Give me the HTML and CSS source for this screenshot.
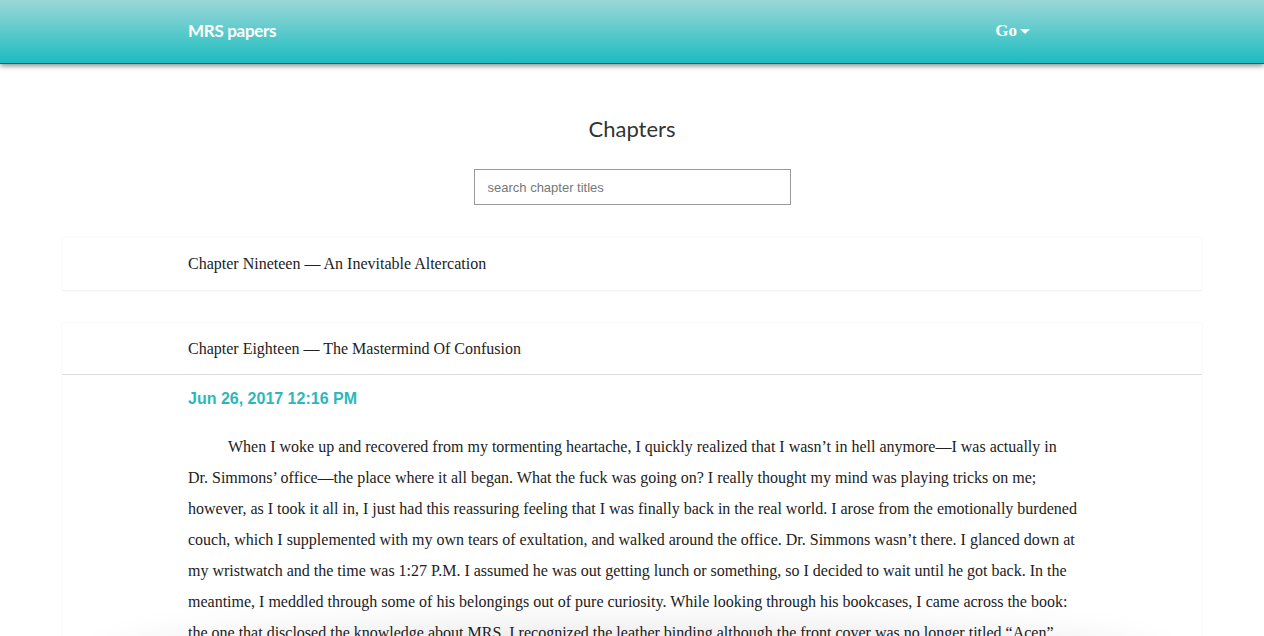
FILE: index.html
```html
<!DOCTYPE html>
<html lang="en">
<head>
<meta charset="utf-8">
<title>MRS papers</title>
<link rel="stylesheet" href="styles.css">
</head>
<body>
<header class="navbar">
  <a class="brand" href="#">MRS papers</a>
  <a class="go" href="#">Go <span class="caret"></span></a>
</header>
<main class="page">
  <h1 class="title">Chapters</h1>
  <div class="search-wrap">
    <input class="search" type="text" placeholder="search chapter titles">
  </div>
  <section class="panel">
    <div class="panel-head">Chapter Nineteen — An Inevitable Altercation</div>
  </section>
  <section class="panel">
    <div class="panel-head bordered">Chapter Eighteen — The Mastermind Of Confusion</div>
    <div class="panel-body">
      <div class="date">Jun 26, 2017 12:16 PM</div>
      <p class="story">When I woke up and recovered from my tormenting heartache, I quickly realized that I wasn’t in hell anymore—I was actually in Dr. Simmons’ office—the place where it all began. What the fuck was going on? I really thought my mind was playing tricks on me; however, as I took it all in, I just had this reassuring feeling that I was finally back in the real world. I arose from the emotionally burdened couch, which I supplemented with my own tears of exultation, and walked around the office. Dr. Simmons wasn’t there. I glanced down at my wristwatch and the time was 1:27 P.M. I assumed he was out getting lunch or something, so I decided to wait until he got back. In the meantime, I meddled through some of his belongings out of pure curiosity. While looking through his bookcases, I came across the book: the one that disclosed the knowledge about MRS. I recognized the leather binding although the front cover was no longer titled “Acen” and the pages were worn and yellowed with age, as though it had been sitting there for decades.</p>
    </div>
  </section>
</main>
<div class="bottom-shade"></div>
</body>
</html>
```
FILE: styles.css
```css
* { box-sizing: border-box; }
html, body { margin: 0; padding: 0; background: #fff; }
body { font-family: "Liberation Serif", "Times New Roman", serif; color: #222; overflow: hidden; height: 636px; }

.navbar {
  height: 64px;
  display: flex;
  align-items: center;
  justify-content: space-between;
  padding: 0 234px 2px 188px;
  background: linear-gradient(to bottom, #9cd7d8 0%, #5ccacb 50%, #1bbcc0 100%);
  border-bottom: 1px solid #2a5a5c;
  box-shadow: 0 2px 5px rgba(0,0,0,0.45);
  position: relative;
  z-index: 2;
}
.brand {
  color: #fff;
  text-decoration: none;
  font-family: "Lato", "Open Sans", sans-serif;
  font-weight: 700;
  font-size: 17px;
  letter-spacing: -0.3px;
}
.go {
  color: #fff;
  text-decoration: none;
  font-family: "Liberation Serif", serif;
  font-weight: 700;
  font-size: 17px;
  display: flex;
  align-items: center;
  gap: 3px;
}
.caret {
  display: inline-block;
  width: 0; height: 0;
  border-left: 5px solid transparent;
  border-right: 5px solid transparent;
  border-top: 5px solid #fff;
  margin-top: 1px;
}

.page { width: 1142px; margin: 0 auto; padding-top: 50px; }
.title {
  margin: 0;
  text-align: center;
  font-family: "Lato", "Open Sans", sans-serif;
  font-weight: 400;
  font-size: 22px;
  color: #333;
  line-height: 30px;
}
.search-wrap { display: flex; justify-content: center; margin-top: 25px; margin-bottom: 31px; }
.search {
  width: 317px;
  height: 36px;
  border: 1px solid #999;
  padding: 0 13px;
  font-family: "Liberation Sans", Arial, sans-serif;
  font-size: 13px;
  color: #555;
  outline: none;
}
.search::placeholder { color: #777; }

.panel {
  border: 1px solid #fafafa;
  border-bottom-color: #f2f2f2;
  border-radius: 4px;
  box-shadow: 0 1px 1px rgba(0,0,0,0.02);
  margin-bottom: 31px;
  background: #fff;
}
.panel-head {
  padding: 0 126px;
  height: 53px;
  display: flex;
  align-items: center;
  font-size: 16px;
  color: #222;
}
.panel-head.bordered { border-bottom: 1px solid #dcdcdc; height: 52px; }
.panel-body { padding: 14px 123px 0 126px; }
.date {
  font-family: "Liberation Sans", Arial, sans-serif;
  font-weight: 700;
  font-size: 16px;
  color: #2bb8bc;
  line-height: 20px;
}
.story {
  margin: 22px 0 0;
  text-indent: 40px;
  font-size: 16px;
  line-height: 31px;
  color: #222;
}
.bottom-shade {
  position: fixed;
  left: 110px;
  right: 110px;
  bottom: -60px;
  height: 60px;
  border-radius: 50%;
  box-shadow: 0 0 40px 8px rgba(0,0,0,0.1);
  z-index: 3;
}
```
